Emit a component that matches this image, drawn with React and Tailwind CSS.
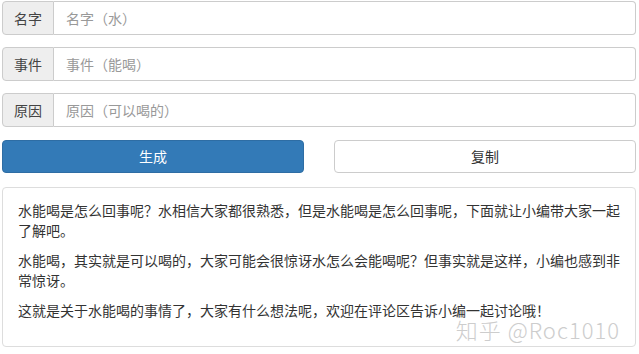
const fields = [
  { label: '名字', placeholder: '名字（水）' },
  { label: '事件', placeholder: '事件（能喝）' },
  { label: '原因', placeholder: '原因（可以喝的）' }
]

const paragraphs = [
  '水能喝是怎么回事呢？水相信大家都很熟悉，但是水能喝是怎么回事呢，下面就让小编带大家一起了解吧。',
  '水能喝，其实就是可以喝的，大家可能会很惊讶水怎么会能喝呢？但事实就是这样，小编也感到非常惊讶。',
  '这就是关于水能喝的事情了，大家有什么想法呢，欢迎在评论区告诉小编一起讨论哦！'
]

export default function App() {
  return (
    <div
      className="w-[639px] h-[354px] bg-white pl-[2px] pr-[3px] pt-px text-[14px] text-[#333]"
      style={{ fontFamily: '"Microsoft YaHei", "Noto Sans CJK SC", sans-serif' }}
    >
      <div className="flex flex-col gap-[12px]">
        {fields.map(f => (
          <div key={f.label} className="flex h-[34px]">
            <span className="w-[52px] flex items-center justify-center bg-[#eee] border border-[#ccc] rounded-l-[4px] text-[#444]">
              {f.label}
            </span>
            <input
              placeholder={f.placeholder}
              className="flex-1 px-3 border border-l-0 border-[#ccc] rounded-r-[4px] outline-none placeholder:text-[#999]"
            />
          </div>
        ))}

        <div className="grid grid-cols-2 gap-[30px] mt-px">
          <button className="h-[33px] rounded-[4px] bg-[#337ab7] border border-[#2e6da4] text-white">
            生成
          </button>
          <button className="h-[33px] rounded-[4px] bg-white border border-[#ccc] text-[#333]">
            复制
          </button>
        </div>
      </div>

      <div className="relative mt-[14px] h-[160px] border border-[#ddd] rounded-[4px] pt-[12px] pl-[15px] pr-[10px] leading-[20px]">
        {paragraphs.map((p, i) => (
          <p key={i} className="mb-[10px]">{p}</p>
        ))}
        <span className="absolute right-[15px] bottom-[6px] text-[22px] leading-none text-[#cdcdcd] font-light tracking-[1px]">
          知乎 @Roc1010
        </span>
      </div>
    </div>
  )
}
